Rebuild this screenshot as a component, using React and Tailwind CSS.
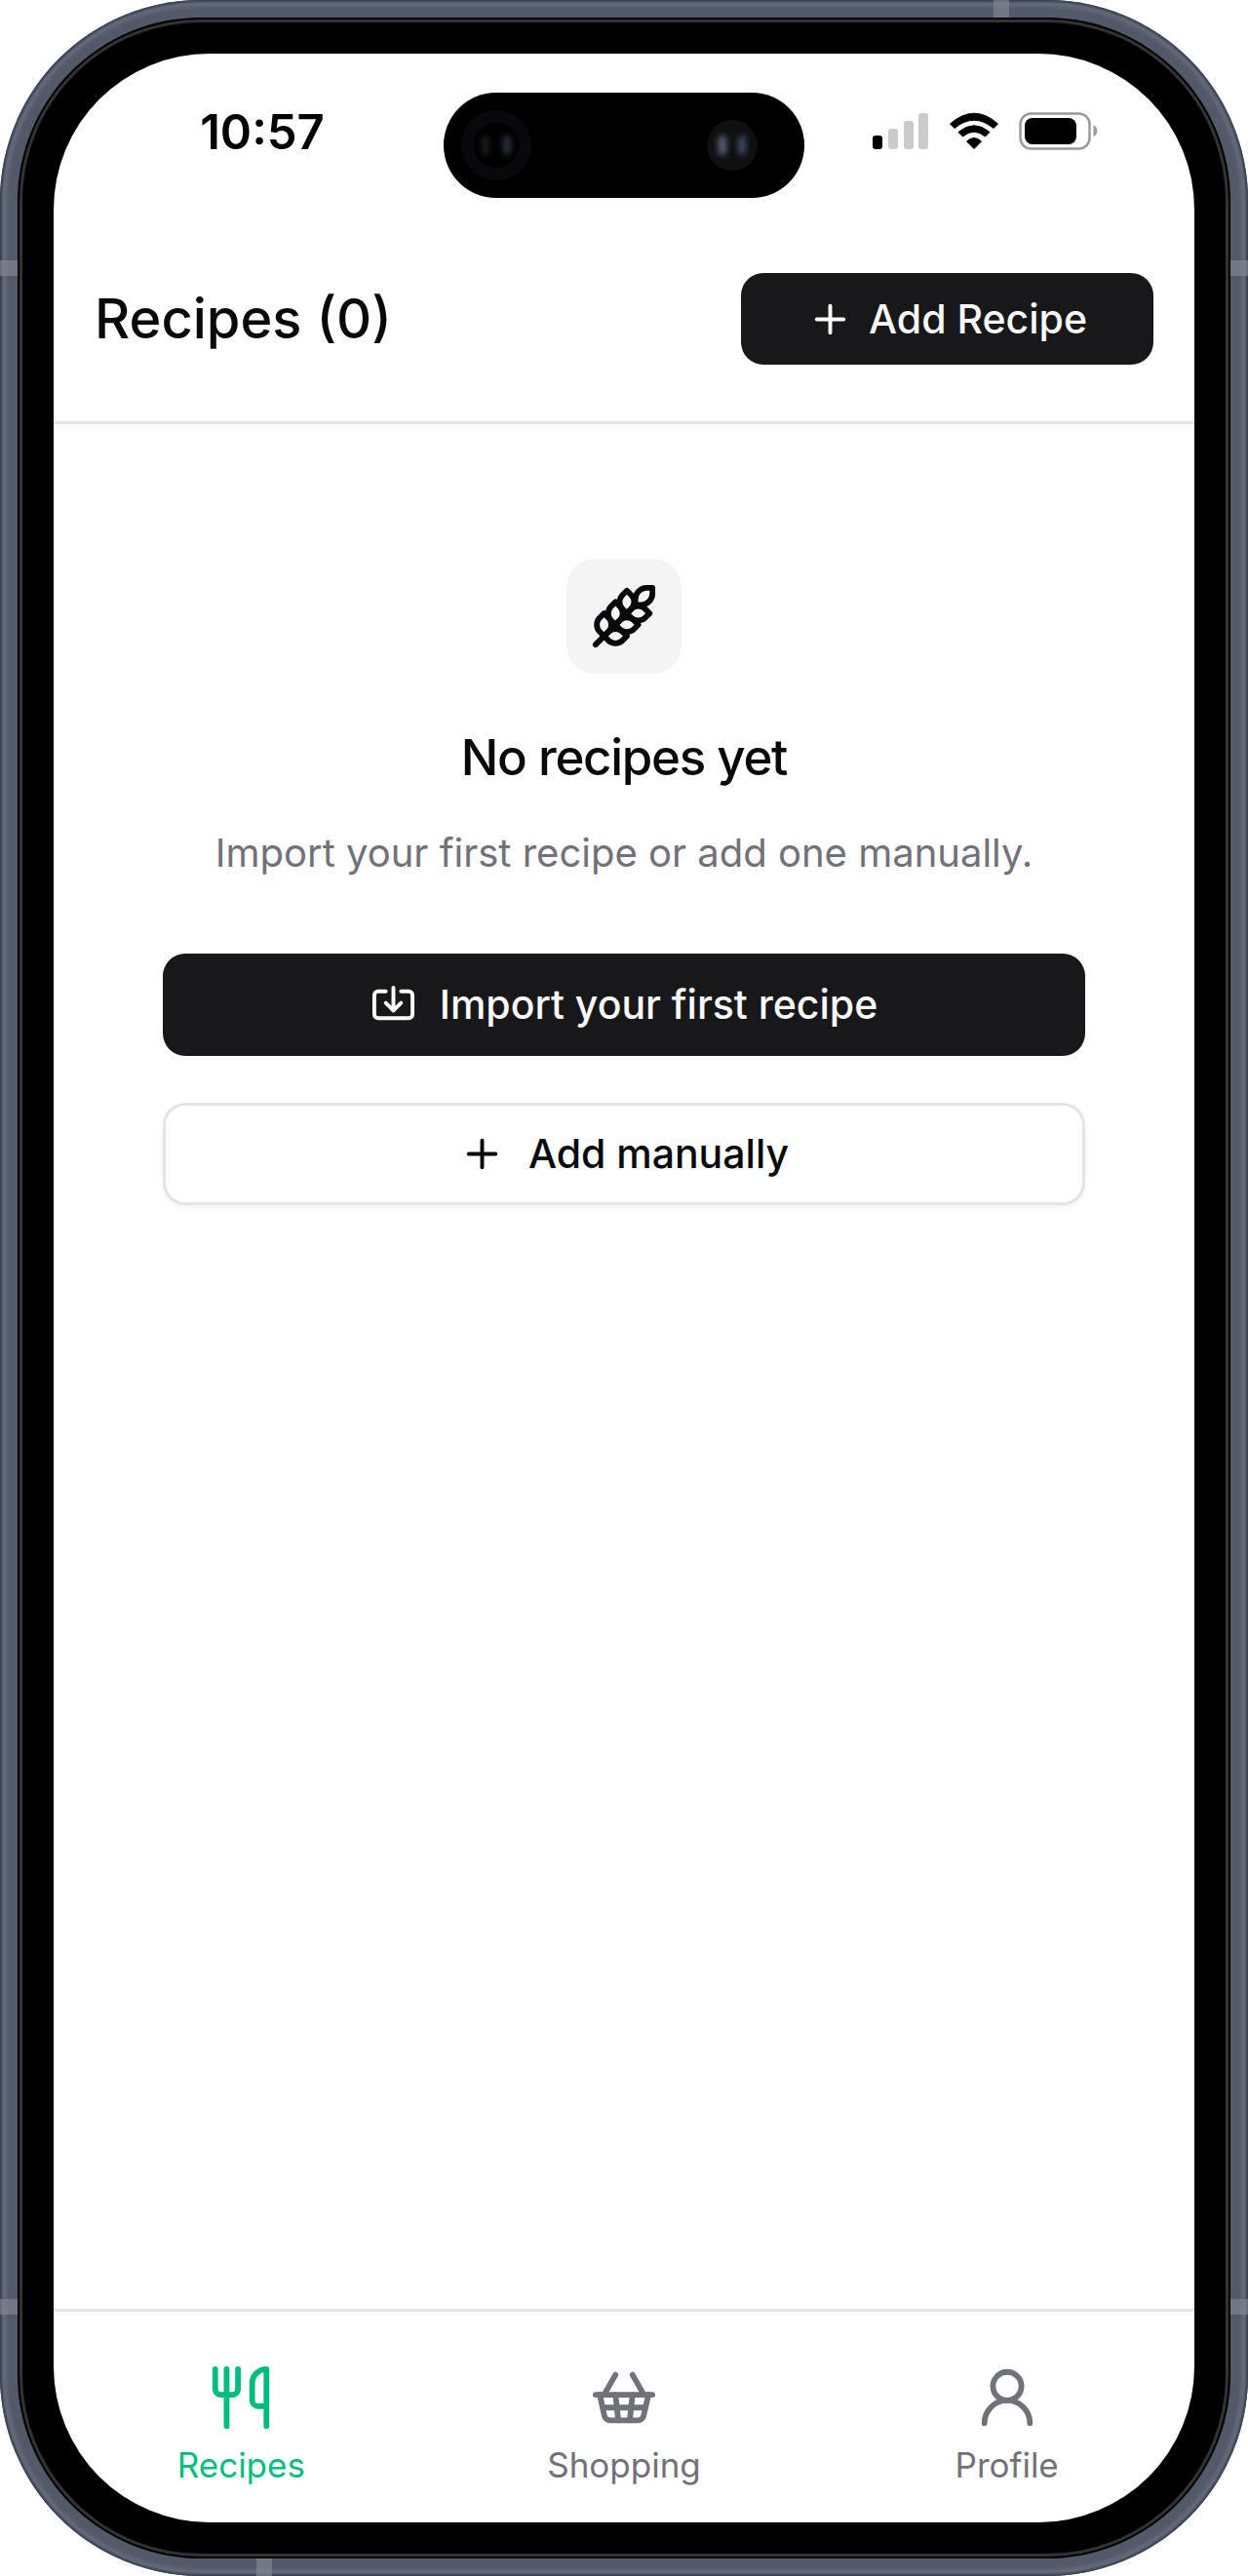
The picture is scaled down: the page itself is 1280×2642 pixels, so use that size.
import { useState } from 'react';
import { Import, Plus, ShoppingBasket, UserRound, Utensils, Wheat } from 'lucide-react';

const TABS = [
  { id: 'recipes', label: 'Recipes', icon: Utensils },
  { id: 'shopping', label: 'Shopping', icon: ShoppingBasket },
  { id: 'profile', label: 'Profile', icon: UserRound },
];

function StatusIcons() {
  return (
    <svg width="232" height="40" viewBox="0 0 232 40" aria-hidden="true">
      {/* signal */}
      <rect x="0" y="24" width="10" height="14" rx="3" fill="#000" />
      <rect x="16" y="17" width="10" height="21" rx="3" fill="#cbcbcb" />
      <rect x="32" y="9" width="10" height="29" rx="3" fill="#cbcbcb" />
      <rect x="47" y="1" width="10" height="37" rx="3" fill="#cbcbcb" />
      {/* wifi */}
      <path d="M79.5 12 Q104 -9.500 128.500 12 L124 16.500 Q104 0 84 16.500 Z" fill="#000" stroke="#000" strokeWidth="1" strokeLinejoin="round" />
      <path d="M88 20.500 Q104 7 120 20.500 L115.500 25 Q104 15.500 92.500 25 Z" fill="#000" stroke="#000" strokeWidth="1" strokeLinejoin="round" />
      <path d="M96.500 30 Q104 23 111.500 30 L104 37.500 Z" fill="#000" stroke="#000" strokeWidth="1" strokeLinejoin="round" />
      {/* battery */}
      <rect x="151.500" y="1.500" width="71" height="36" rx="11" fill="none" stroke="#98989d" strokeWidth="2.500" />
      <rect x="156" y="6" width="53" height="27" rx="8" fill="#000" />
      <path d="M226.500 13.500 C231.500 15 231.500 23.500 226.500 25 Z" fill="#98989d" />
    </svg>
  );
}

function DynamicIsland() {
  return (
    <div className="flex h-[108px] items-center justify-between rounded-full bg-black pr-12 pl-[18px]">
      <div className="flex size-[72px] items-center justify-center rounded-full bg-[#08090b]">
        <div className="flex size-[46px] items-center justify-center gap-[14px] rounded-full bg-black">
          <span className="h-5 w-2 rounded-full bg-[#1c1c1f] blur-[3px]" />
          <span className="h-5 w-2 rounded-full bg-[#2c3342] blur-[3px]" />
        </div>
      </div>
      <div className="flex size-[52px] items-center justify-center gap-3 rounded-full bg-[#101010]">
        <span className="h-5 w-2 rounded-full bg-[#5d667e] blur-[3px]" />
        <span className="h-5 w-2 rounded-full bg-[#3d4a68] blur-[3px]" />
      </div>
    </div>
  );
}

function StatusBar() {
  return (
    <div className="grid grid-cols-[1fr_370px_1fr] pt-10">
      <div className="flex h-20 items-center justify-center pl-7 text-[49px] leading-none font-semibold text-black">
        10:57
      </div>
      <DynamicIsland />
      <div className="flex h-20 items-center justify-center pr-7">
        <StatusIcons />
      </div>
    </div>
  );
}

function PhoneFrame({ children }) {
  return (
    <div className="relative flex min-h-screen flex-col overflow-hidden rounded-[206px] bg-[#525968] p-[18px] font-['Inter',sans-serif] shadow-[inset_0_0_3px_2px_#313b46,inset_0_0_4px_6px_#6c7284]">
      {/* antenna bands */}
      <span className="absolute top-0 right-[245px] h-[18px] w-4 bg-[#8b8c98]/60" />
      <span className="absolute bottom-0 left-[263px] h-[18px] w-4 bg-[#8b8c98]/60" />
      <span className="absolute top-[267px] left-0 h-4 w-[18px] bg-[#8b8c98]/60" />
      <span className="absolute top-[267px] right-0 h-4 w-[18px] bg-[#8b8c98]/60" />
      <span className="absolute bottom-[268px] left-0 h-4 w-[18px] bg-[#8b8c98]/60" />
      <span className="absolute right-0 bottom-[268px] h-4 w-[18px] bg-[#8b8c98]/60" />

      <div className="flex flex-1 flex-col rounded-[188px] bg-black p-[2px]">
        <div className="flex flex-1 flex-col rounded-[186px] border-[3px] border-[#333333] p-8">
          <div className="flex flex-1 flex-col overflow-hidden rounded-[160px] bg-white">
            {children}
          </div>
        </div>
      </div>
    </div>
  );
}

export default function App() {
  const [tab, setTab] = useState('recipes');

  return (
    <PhoneFrame>
      <StatusBar />

      <header className="flex items-center justify-between border-b-[3px] border-[#e4e4e7] px-[42px] pt-[77px] pb-[58px]">
        <h1 className="text-[56px] leading-none font-medium text-[#09090b]">Recipes (0)</h1>
        <button type="button" className="flex h-[94px] items-center gap-4 rounded-[23px] bg-[#18181b] px-[68px] text-[41px] leading-none font-medium text-[#fafafa]">
          <Plus size={47} />
          Add Recipe
        </button>
      </header>

      <main className="flex flex-1 flex-col items-center px-28 pt-[138px] text-center">
        <div className="flex size-[118px] items-center justify-center rounded-[29px] bg-[#f4f4f5] text-[#09090b]">
          <Wheat size={70} />
        </div>
        <h2 className="mt-14 text-[51px] leading-[60px] font-medium tracking-tight text-[#09090b]">No recipes yet</h2>
        <p className="mt-[38px] text-[40px] leading-[60px] text-[#71717a]">
          Import your first recipe or add one manually.
        </p>
        <div className="mt-[73px] flex w-full flex-col gap-12">
          <button type="button" className="flex h-[105px] items-center justify-center gap-6 rounded-[23px] bg-[#18181b] text-[41px] leading-none font-medium text-[#fafafa]">
            <Import size={47} />
            Import your first recipe
          </button>
          <button type="button" className="flex h-[105px] items-center justify-center gap-6 rounded-[23px] border-[3px] border-[#e4e4e7] bg-white text-[41px] leading-none font-medium text-[#09090b] shadow-[0_3px_6px_rgba(0,0,0,0.05)]">
            <Plus size={47} />
            Add manually
          </button>
        </div>
      </main>

      <nav className="grid grid-cols-3 gap-2 border-t-[3px] border-[#e4e4e7] pt-[53px] pb-[35px]">
        {TABS.map(({ id, label, icon: Icon }) => (
          <button
            key={id}
            type="button"
            onClick={() => setTab(id)}
            className={`flex flex-col items-center gap-[10px] text-[35px] leading-[48px] ${tab === id ? 'text-[#00bc7d]' : 'text-[#71717a]'}`}
          >
            <Icon size={70} />
            {label}
          </button>
        ))}
      </nav>
    </PhoneFrame>
  );
}
